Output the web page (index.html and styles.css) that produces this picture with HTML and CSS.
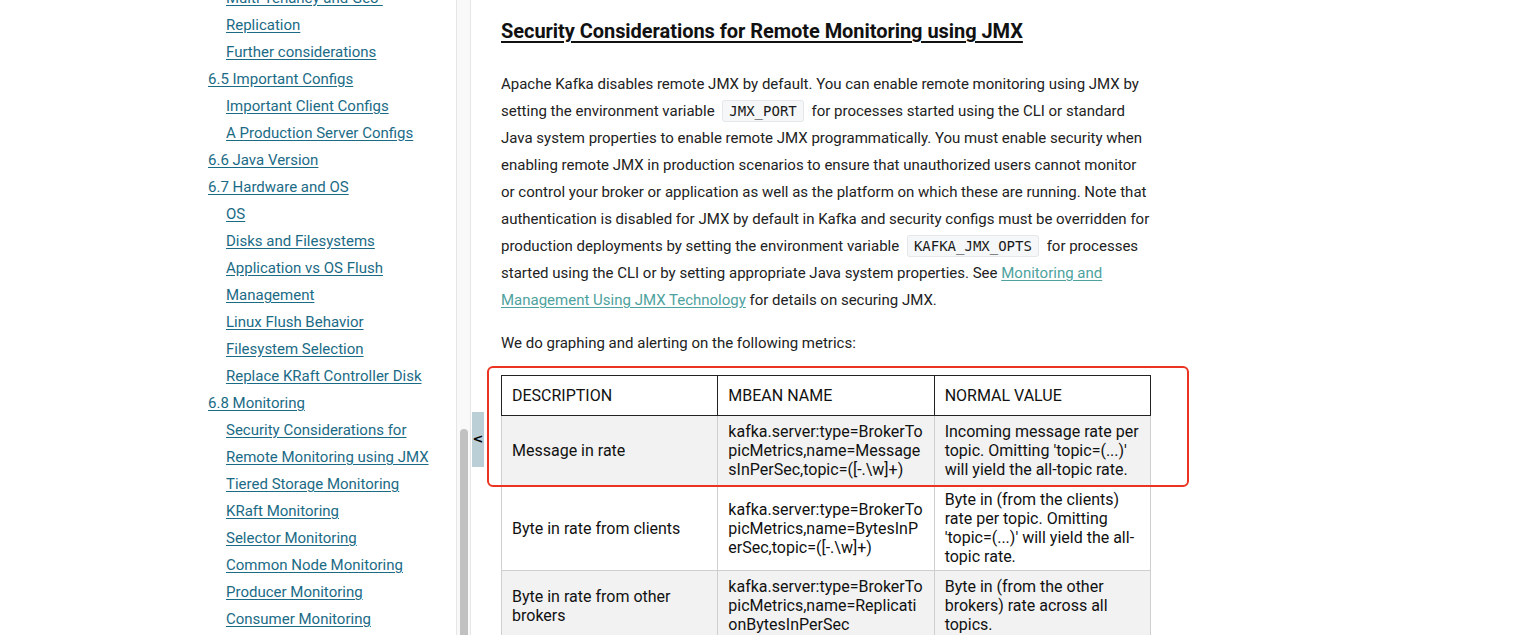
FILE: index.html
```html
<!DOCTYPE html>
<html lang="en">
<head>
<meta charset="utf-8">
<title>Kafka Docs - Monitoring</title>
<link rel="stylesheet" href="styles.css">
</head>
<body>
<div class="page">
  <nav class="sidebar">
    <ul class="toc">
      <li class="l2"><a href="#">Multi-Tenancy and Geo-Replication</a></li>
      <li class="l2"><a href="#">Further considerations</a></li>
      <li class="l1"><a href="#">6.5 Important Configs</a></li>
      <li class="l2"><a href="#">Important Client Configs</a></li>
      <li class="l2"><a href="#">A Production Server Configs</a></li>
      <li class="l1"><a href="#">6.6 Java Version</a></li>
      <li class="l1"><a href="#">6.7 Hardware and OS</a></li>
      <li class="l2"><a href="#">OS</a></li>
      <li class="l2"><a href="#">Disks and Filesystems</a></li>
      <li class="l2"><a href="#">Application vs OS Flush Management</a></li>
      <li class="l2"><a href="#">Linux Flush Behavior</a></li>
      <li class="l2"><a href="#">Filesystem Selection</a></li>
      <li class="l2"><a href="#">Replace KRaft Controller Disk</a></li>
      <li class="l1"><a href="#">6.8 Monitoring</a></li>
      <li class="l2"><a href="#">Security Considerations for Remote Monitoring using JMX</a></li>
      <li class="l2"><a href="#">Tiered Storage Monitoring</a></li>
      <li class="l2"><a href="#">KRaft Monitoring</a></li>
      <li class="l2"><a href="#">Selector Monitoring</a></li>
      <li class="l2"><a href="#">Common Node Monitoring</a></li>
      <li class="l2"><a href="#">Producer Monitoring</a></li>
      <li class="l2"><a href="#">Consumer Monitoring</a></li>
      <li class="l2"><a href="#">Connect Monitoring</a></li>
    </ul>
  </nav>
  <div class="scrolltrack"><div class="thumb"></div></div>
  <div class="togglecol"><button class="toggle">&lt;</button></div>
  <main class="content">
    <h3 class="title"><a href="#">Security Considerations for Remote Monitoring using JMX</a></h3>
    <p>Apache Kafka disables remote JMX by default. You can enable remote monitoring using JMX by setting the environment variable <code>JMX_PORT</code> for processes started using the CLI or standard Java system properties to enable remote JMX programmatically. You must enable security when enabling remote JMX in production scenarios to ensure that unauthorized users cannot monitor or control your broker or application as well as the platform on which these are running. Note that authentication is disabled for JMX by default in Kafka and security configs must be overridden for production deployments by setting the environment variable <code>KAFKA_JMX_OPTS</code> for processes started using the CLI or by setting appropriate Java system properties. See <a class="ext" href="#">Monitoring and Management Using JMX Technology</a> for details on securing JMX.</p>
    <p>We do graphing and alerting on the following metrics:</p>
    <div class="tablewrap">
      <table class="metrics">
        <thead>
          <tr><th>DESCRIPTION</th><th>MBEAN NAME</th><th>NORMAL VALUE</th></tr>
        </thead>
        <tbody>
          <tr class="alt"><td>Message in rate</td><td>kafka.server:type=BrokerTopicMetrics,name=MessagesInPerSec,topic=([-.\w]+)</td><td>Incoming message rate per topic. Omitting 'topic=(...)' will yield the all-topic rate.</td></tr>
          <tr><td>Byte in rate from clients</td><td>kafka.server:type=BrokerTopicMetrics,name=BytesInPerSec,topic=([-.\w]+)</td><td>Byte in (from the clients) rate per topic. Omitting 'topic=(...)' will yield the all-topic rate.</td></tr>
          <tr class="alt"><td>Byte in rate from other brokers</td><td>kafka.server:type=BrokerTopicMetrics,name=ReplicationBytesInPerSec</td><td>Byte in (from the other brokers) rate across all topics.</td></tr>
        </tbody>
      </table>
      <div class="highlight"></div>
    </div>
  </main>
</div>
</body>
</html>
```

FILE: styles.css
```css
* { box-sizing: border-box; }
html, body { margin: 0; padding: 0; height: 100%; }
body {
  font-family: Roboto, "Noto Sans", "Liberation Sans", sans-serif;
  background: #fff;
  color: #222;
  overflow: hidden;
}
.page {
  display: flex;
  align-items: stretch;
  height: 635px;
  overflow: hidden;
}
.sidebar {
  width: 456px;
  flex: 0 0 456px;
  overflow: hidden;
  padding-left: 208px;
}
.toc {
  list-style: none;
  margin: -15px 0 0 0;
  padding: 0;
  font-size: 15px;
  line-height: 27px;
}
.toc li { margin: 0; }
.toc li.l2 { padding-left: 18px; width: 234px; }
.toc a {
  color: #1b6b86;
  text-decoration: underline;
  text-underline-offset: 2px;
}
.scrolltrack {
  flex: 0 0 15px;
  background: #f9f9f9;
  border-left: 1px solid #e6e6e6;
  border-right: 1px solid #e6e6e6;
  display: flex;
  flex-direction: column;
  padding-top: 429px;
  padding-left: 3px;
}
.thumb {
  width: 8px;
  flex: 1;
  background: #c1c1c1;
  border-radius: 4px 4px 0 0;
}
.togglecol {
  flex: 0 0 13px;
  padding-top: 412px;
}
.toggle {
  display: block;
  width: 12px;
  height: 55px;
  margin-left: 1px;
  border: 0;
  padding: 0 0 2px 0;
  background: #bbd0d6;
  color: #000;
  font-family: "DejaVu Sans", sans-serif;
  font-weight: 900;
  font-size: 13px;
  line-height: 1;
  cursor: pointer;
}
.content {
  flex: 0 0 auto;
  width: 667px;
  padding-left: 17px;
}
.title {
  margin: 17px 0 26px;
  font-size: 20px;
  line-height: 28px;
  font-weight: 700;
  letter-spacing: -0.05px;
}
.title a { color: #111; text-decoration: underline; text-underline-offset: 3px; }
.content p {
  margin: 0 0 16px;
  font-size: 15px;
  line-height: 27px;
  color: #222;
}
.content p code {
  font-family: "DejaVu Sans Mono", "Liberation Mono", monospace;
  font-size: 14px;
  background: #f5f7f8;
  border: 1px solid #e4e8ea;
  border-radius: 3px;
  padding: 2px 6px;
  margin: 0 4px;
  color: #1a1a1a;
}
.content a.ext { color: #4ea29e; text-decoration: underline; text-underline-offset: 2px; }
.tablewrap {
  position: relative;
  margin-top: 18px;
}
.metrics {
  border-collapse: collapse;
  width: 650px;
  table-layout: fixed;
  font-size: 16px;
  line-height: 19px;
  color: #111;
}
.metrics th, .metrics td {
  width: 216px;
  text-align: left;
  vertical-align: middle;
  word-break: break-all;
  overflow-wrap: anywhere;
}
.metrics td:first-child { word-break: normal; }
.metrics td:last-child { word-break: normal; overflow-wrap: normal; }
.metrics th {
  font-weight: 400;
  padding: 10px 10px;
  border: 1px solid #222;
  background: #fff;
}
.metrics td {
  padding: 4px 10px;
  height: 70px;
  border: 1px solid #cfcfcf;
}
.metrics tr.alt td { background: #f2f2f2; }
.highlight {
  position: absolute;
  left: -14px;
  top: -9px;
  width: 702px;
  height: 121px;
  border: 2.5px solid #ea3320;
  border-radius: 6px;
  pointer-events: none;
}
```
